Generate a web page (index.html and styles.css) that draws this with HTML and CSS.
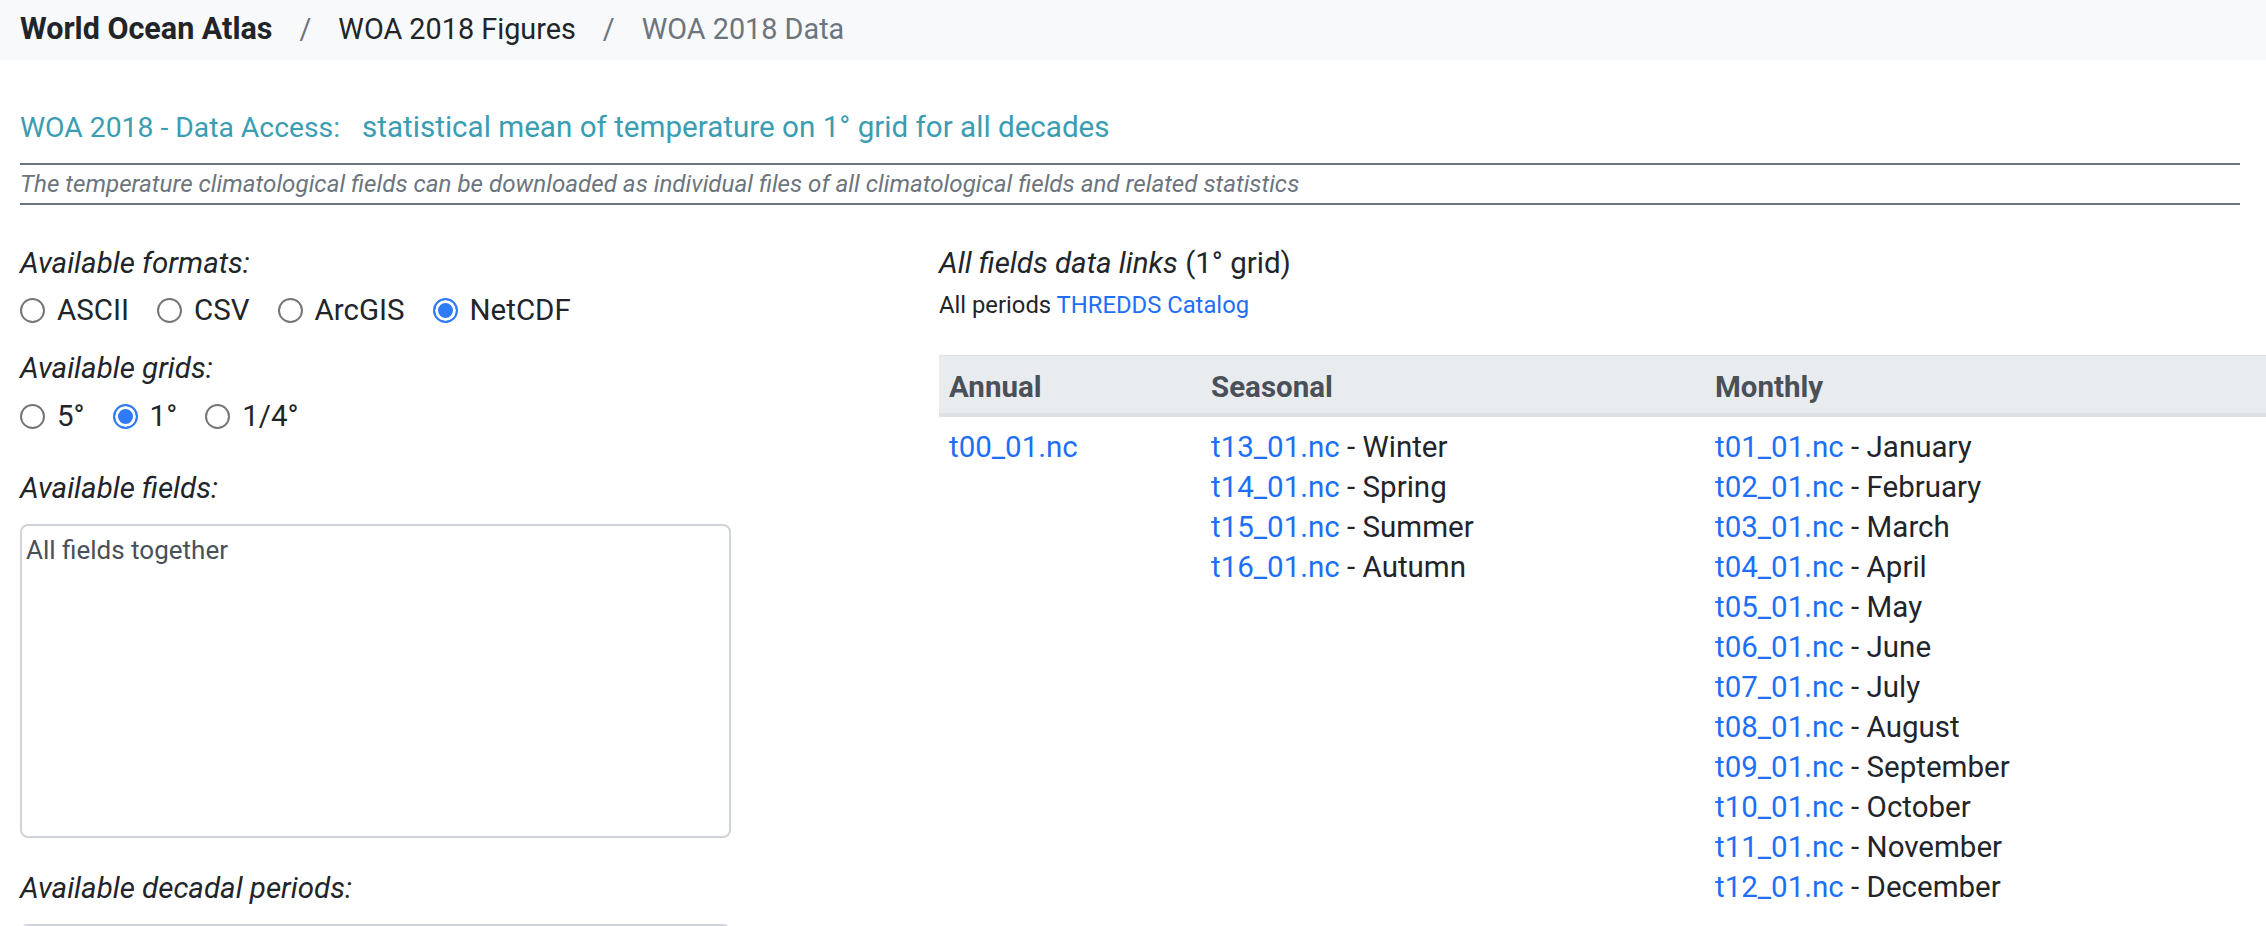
FILE: index.html
```html
<!DOCTYPE html>
<html lang="en">
<head>
<meta charset="utf-8">
<title>WOA 2018 Data Access</title>
<link rel="stylesheet" href="styles.css">
</head>
<body>
<nav class="topbar">
  <span class="crumb crumb-home">World Ocean Atlas</span>
  <span class="sep">/</span>
  <span class="crumb">WOA 2018 Figures</span>
  <span class="sep">/</span>
  <span class="crumb crumb-active">WOA 2018 Data</span>
</nav>

<main class="page">
  <h1 class="title"><span class="title-main">WOA 2018 - Data Access:</span><span class="title-sub">statistical mean of temperature on 1° grid for all decades</span></h1>
  <div class="desc">The temperature climatological fields can be downloaded as individual files of all climatological fields and related statistics</div>

  <div class="columns">
    <section class="left">
      <div class="label">Available formats:</div>
      <div class="radios">
        <label class="opt"><input type="radio" name="fmt"><span>ASCII</span></label>
        <label class="opt"><input type="radio" name="fmt"><span>CSV</span></label>
        <label class="opt"><input type="radio" name="fmt"><span>ArcGIS</span></label>
        <label class="opt"><input type="radio" name="fmt" checked><span>NetCDF</span></label>
      </div>
      <div class="label">Available grids:</div>
      <div class="radios">
        <label class="opt"><input type="radio" name="grid"><span>5°</span></label>
        <label class="opt"><input type="radio" name="grid" checked><span>1°</span></label>
        <label class="opt"><input type="radio" name="grid"><span>1/4°</span></label>
      </div>
      <div class="label label-gap">Available fields:</div>
      <div class="listbox">All fields together</div>
      <div class="label label-gap">Available decadal periods:</div>
      <div class="listbox"></div>
    </section>

    <section class="right">
      <div class="label"><em>All fields data links</em> (1° grid)</div>
      <div class="small">All periods <a href="#">THREDDS Catalog</a></div>
      <table class="links">
        <thead>
          <tr><th class="c-annual">Annual</th><th class="c-season">Seasonal</th><th>Monthly</th></tr>
        </thead>
        <tbody>
          <tr>
            <td><a href="#">t00_01.nc</a></td>
            <td>
              <a href="#">t13_01.nc</a> - Winter<br>
              <a href="#">t14_01.nc</a> - Spring<br>
              <a href="#">t15_01.nc</a> - Summer<br>
              <a href="#">t16_01.nc</a> - Autumn
            </td>
            <td>
              <a href="#">t01_01.nc</a> - January<br>
              <a href="#">t02_01.nc</a> - February<br>
              <a href="#">t03_01.nc</a> - March<br>
              <a href="#">t04_01.nc</a> - April<br>
              <a href="#">t05_01.nc</a> - May<br>
              <a href="#">t06_01.nc</a> - June<br>
              <a href="#">t07_01.nc</a> - July<br>
              <a href="#">t08_01.nc</a> - August<br>
              <a href="#">t09_01.nc</a> - September<br>
              <a href="#">t10_01.nc</a> - October<br>
              <a href="#">t11_01.nc</a> - November<br>
              <a href="#">t12_01.nc</a> - December
            </td>
          </tr>
        </tbody>
      </table>
    </section>
  </div>
</main>
</body>
</html>
```
FILE: styles.css
```css
html, body {
  margin: 0;
  padding: 0;
  overflow: hidden;
  background: #fff;
}
body {
  font-family: Roboto, "Liberation Sans", sans-serif;
  font-size: 29.5px;
  color: #212529;
}
a {
  color: #1f6ff5;
  text-decoration: none;
}

/* top breadcrumb bar */
.topbar {
  height: 60px;
  box-sizing: border-box;
  background: #f8f9fa;
  padding: 0 0 2px 20px;
  line-height: 58px;
  display: flex;
  white-space: nowrap;
  font-size: 28.8px;
}
.crumb { color: #212529; }
.crumb-home { font-weight: 700; font-size: 30.5px; }
.crumb-active { color: #6c757d; }
.sep {
  color: #6c757d;
  margin: 0 27px;
}

/* page body */
.page {
  padding: 0 26px 0 20px;
}
.title {
  margin: 47px 0 0;
  font-size: 29.5px;
  font-weight: 400;
  line-height: 40px;
  color: #3a9db2;
  border-bottom: 2px solid #6c757d;
  padding-bottom: 15px;
  white-space: nowrap;
}
.title-main { font-size: 28.3px; }
.title-sub { margin-left: 22px; font-size: 29.6px; }
.desc {
  font-size: 24.2px;
  font-style: italic;
  line-height: 38px;
  color: #6c757d;
  border-bottom: 2px solid #6c757d;
  white-space: nowrap;
}

.columns {
  display: grid;
  grid-template-columns: 919px 1fr;
}

.label {
  font-style: italic;
  line-height: 40px;
  margin-top: 38px;
}
.label em { font-style: italic; }
.right .label { font-style: normal; }
.radios + .label { margin-top: 18px; }
.radios + .label.label-gap { margin-top: 32px; }
.listbox + .label.label-gap { margin-top: 30px; }

.radios {
  display: flex;
  gap: 28px;
  margin-top: 8px;
  line-height: 40px;
}
.radios:nth-of-type(2) { margin-top: 7px; }
.opt {
  display: flex;
  align-items: center;
  gap: 12px;
}
.opt input {
  appearance: none;
  -webkit-appearance: none;
  margin: 0;
  width: 25px;
  height: 25px;
  box-sizing: border-box;
  border: 2px solid #767676;
  border-radius: 50%;
  background: #fff;
}
.opt input:checked {
  border-color: #2f7bf5;
  background: #2f7bf5;
  box-shadow: inset 0 0 0 3px #fff;
}

.listbox {
  margin-top: 16px;
  width: 711px;
  height: 314px;
  box-sizing: border-box;
  border: 2px solid #ced4da;
  border-radius: 8px;
  padding: 6px 0 0 4px;
  font-size: 26px;
  line-height: 36px;
  color: #495057;
}

.small {
  font-size: 23.8px;
  line-height: 36px;
  margin-top: 4px;
}

.links {
  margin-top: 32px;
  width: 1360px;
  border-collapse: collapse;
  line-height: 40px;
}
.links th {
  text-align: left;
  font-weight: 700;
  color: #495057;
  background: #e9ecef;
  border-top: 1px solid #dee2e6;
  border-bottom: 4px solid #dee2e6;
  padding: 13px 10px 8px;
  line-height: 36px;
}
.links .c-annual { width: 242px; }
.links .c-season { width: 484px; }
.links td {
  vertical-align: top;
  padding: 10px 10px 0;
  white-space: nowrap;
}
```
